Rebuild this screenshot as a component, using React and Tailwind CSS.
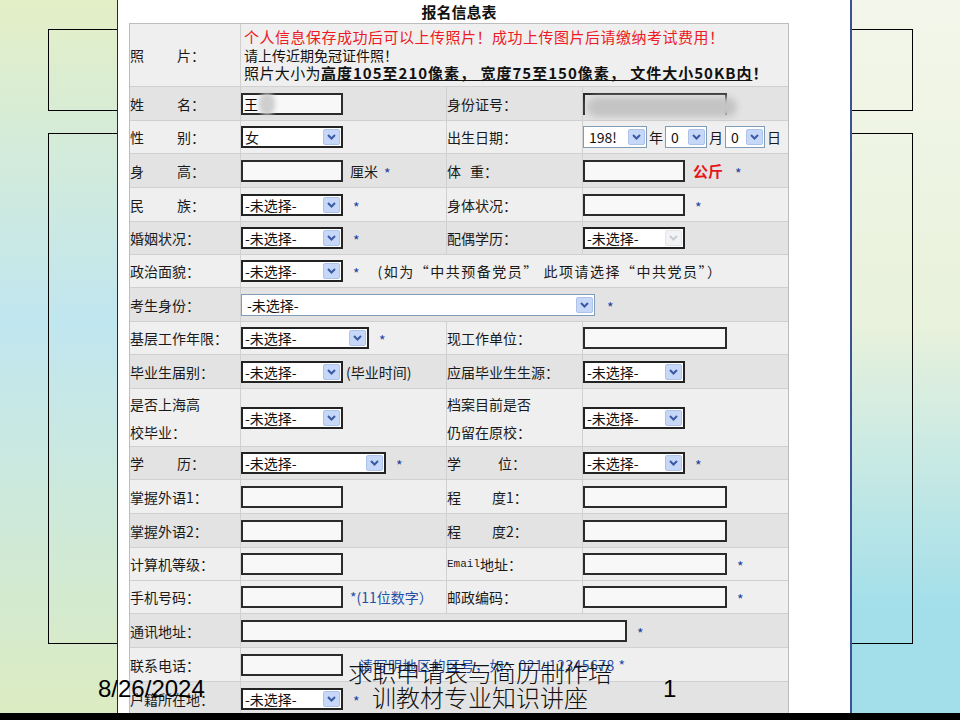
import React from 'react';

// column widths of the form table (inner, border-box)
const C1 = 'w-[111px]';
const C2 = 'w-[206px]';
const C3 = 'w-[136px]';
const C4 = 'w-[205px]';
const SPAN = 'w-[547px]';

const Arrow = ({ dim = false }) => (
  <span
    className={`flex h-[16px] w-[17px] shrink-0 items-center justify-center rounded-[2px] border ${
      dim ? 'border-[#e3e5e9] bg-[#f2f3f5]' : 'border-[#aec3ec] bg-[#c6d7f7]'
    }`}
  >
    <svg width="9" height="6" viewBox="0 0 9 6">
      <path d="M1 1l3.5 3.5L8 1" fill="none" stroke={dim ? '#c8cbd1' : '#3b5aa6'} strokeWidth="2" />
    </svg>
  </span>
);

const Select = ({ w = 'w-[102px]', value = '-未选择-', xp = false, dim = false }) => (
  <div
    className={`${w} flex h-[22px] shrink-0 items-center justify-between bg-white ${
      xp ? 'border border-[#7f9db9] pl-[5px] pr-[1px]' : 'border-2 border-[#232323] pl-[2px] pr-[1px]'
    }`}
  >
    <span className="text-[14px] leading-none text-[#111]">{value}</span>
    <Arrow dim={dim} />
  </div>
);

const Input = ({ w = 'w-[102px]' }) => (
  <input
    type="text"
    readOnly
    className={`${w} h-[22px] shrink-0 border-2 border-[#2b2b2b] bg-[#f8f8f8] outline-none`}
  />
);

const Star = ({ ml = 'ml-[10px]' }) => (
  <span className={`${ml} inline-block translate-y-[2px] text-[14px] leading-none text-[#1f3f9f]`}>*</span>
);

// label with a gap between two characters, e.g. 姓　名：
const Label = ({ a, b, gap = 'ml-[33px]' }) => (
  <span className="text-[14px] leading-none text-[#1a1a1a]">
    {a}
    <span className={`inline-block ${gap}`}>{b}</span>
  </span>
);

const Text = ({ children, className = '' }) => (
  <span className={`text-[14px] leading-none text-[#1a1a1a] ${className}`}>{children}</span>
);

const Row = ({ h = 'h-[33px]', bg = 'bg-[#efefef]', children }) => (
  <div className={`flex ${h} shrink-0 border-b border-[#d0d0d0] ${bg}`}>{children}</div>
);

const Cell = ({ w, last = false, stack = false, className = '', children }) => (
  <div
    className={`flex h-full ${stack ? 'flex-col items-start justify-center' : 'items-center'} ${w} ${
      last ? '' : 'border-r border-[#d0d0d0]'
    } ${className}`}
  >
    {children}
  </div>
);

const L = 'bg-[#efefef]';
const D = 'bg-[#e3e3e3]';

const FormTable = () => (
  <div className="ml-[11px] w-[660px] border border-b-0 border-[#bdbdbd]">
    <Row h="h-[63px]" bg={L}>
      <Cell w={C1}><Label a="照" b="片：" /></Cell>
      <Cell w={SPAN} last stack className="pl-[3px]">
        <p className="text-[15px] leading-[18px] tracking-[0.5px] text-[#ec1b24]">
          个人信息保存成功后可以上传照片！成功上传图片后请缴纳考试费用！
        </p>
        <p className="text-[14px] leading-[18px] text-[#111]">请上传近期免冠证件照！</p>
        <p className="text-[15px] leading-[18px] tracking-[0.4px] text-[#111]">
          照片大小为
          <b className="font-bold underline tracking-[1px]">高度105至210像素， 宽度75至150像素， 文件大小50KB内</b>
          <b className="font-bold">！</b>
        </p>
      </Cell>
    </Row>

    <Row h="h-[34px]" bg={D}>
      <Cell w={C1}><Label a="姓" b="名：" /></Cell>
      <Cell w={C2}>
        <div className="relative flex h-[22px] w-[102px] items-center border-2 border-[#2b2b2b] bg-[#f8f8f8] pl-[1px]">
          <span className="text-[14px] leading-none">王</span>
          <span className="absolute left-[16px] top-[-2px] h-[22px] w-[16px] rounded-full bg-[#cfcfcf] blur-[2px]" />
        </div>
      </Cell>
      <Cell w={C3}><Text>身份证号：</Text></Cell>
      <Cell w={C4} last>
        <div className="relative h-[22px] w-[144px] border-t-2 border-l-2 border-r-2 border-[#2b2b2b]">
          <span className="absolute left-[2px] top-[2px] h-[20px] w-[150px] rounded-full bg-[#c4c4c4] blur-[3px]" />
        </div>
      </Cell>
    </Row>

    <Row h="h-[33px]" bg={L}>
      <Cell w={C1}><Label a="性" b="别：" /></Cell>
      <Cell w={C2}><Select value="女" /></Cell>
      <Cell w={C3}><Text>出生日期：</Text></Cell>
      <Cell w={C4} last>
        <Select w="w-[64px]" value="198!" xp />
        <Text className="mx-[2px]">年</Text>
        <Select w="w-[42px]" value="0" xp />
        <Text className="mx-[2px]">月</Text>
        <Select w="w-[40px]" value="0" xp />
        <Text className="ml-[2px]">日</Text>
      </Cell>
    </Row>

    <Row h="h-[34px]" bg={D}>
      <Cell w={C1}><Label a="身" b="高：" /></Cell>
      <Cell w={C2}>
        <Input />
        <Text className="ml-[7px]">厘米</Text>
        <Star ml="ml-[6px]" />
      </Cell>
      <Cell w={C3}><Label a="体" b="重：" gap="ml-[9px]" /></Cell>
      <Cell w={C4} last>
        <Input />
        <span className="ml-[8px] text-[15px] font-bold leading-none text-[#e8151b]">公斤</span>
        <Star ml="ml-[12px]" />
      </Cell>
    </Row>

    <Row h="h-[34px]" bg={L}>
      <Cell w={C1}><Label a="民" b="族：" /></Cell>
      <Cell w={C2}><Select /><Star /></Cell>
      <Cell w={C3}><Text>身体状况：</Text></Cell>
      <Cell w={C4} last><Input /><Star /></Cell>
    </Row>

    <Row h="h-[33px]" bg={D}>
      <Cell w={C1}><Text>婚姻状况：</Text></Cell>
      <Cell w={C2}><Select /><Star /></Cell>
      <Cell w={C3}><Text>配偶学历：</Text></Cell>
      <Cell w={C4} last><Select dim /></Cell>
    </Row>

    <Row h="h-[33px]" bg={L}>
      <Cell w={C1}><Text>政治面貌：</Text></Cell>
      <Cell w={SPAN} last>
        <Select />
        <Star />
        <Text className="ml-[18px] tracking-[1.5px]">(如为“中共预备党员” 此项请选择“中共党员”）</Text>
      </Cell>
    </Row>

    <Row h="h-[34px]" bg={D}>
      <Cell w={C1}><Text>考生身份：</Text></Cell>
      <Cell w={SPAN} last>
        <Select w="w-[354px]" xp />
        <Star ml="ml-[12px]" />
      </Cell>
    </Row>

    <Row h="h-[33px]" bg={L}>
      <Cell w={C1}><Text>基层工作年限：</Text></Cell>
      <Cell w={C2}><Select w="w-[128px]" /><Star /></Cell>
      <Cell w={C3}><Text>现工作单位：</Text></Cell>
      <Cell w={C4} last><Input w="w-[144px]" /></Cell>
    </Row>

    <Row h="h-[34px]" bg={D}>
      <Cell w={C1}><Text>毕业生届别：</Text></Cell>
      <Cell w={C2}><Select /><Text className="ml-[3px]">(毕业时间)</Text></Cell>
      <Cell w={C3}><Text>应届毕业生生源：</Text></Cell>
      <Cell w={C4} last><Select /></Cell>
    </Row>

    <Row h="h-[58px]" bg={L}>
      <Cell w={C1} stack>
        <p className="text-[14px] leading-[28px] text-[#1a1a1a]">是否上海高</p>
        <p className="text-[14px] leading-[28px] text-[#1a1a1a]">校毕业：</p>
      </Cell>
      <Cell w={C2}><Select /></Cell>
      <Cell w={C3} stack>
        <p className="text-[14px] leading-[28px] text-[#1a1a1a]">档案目前是否</p>
        <p className="text-[14px] leading-[28px] text-[#1a1a1a]">仍留在原校：</p>
      </Cell>
      <Cell w={C4} last><Select /></Cell>
    </Row>

    <Row h="h-[33px]" bg={D}>
      <Cell w={C1}><Label a="学" b="历：" /></Cell>
      <Cell w={C2}><Select w="w-[145px]" /><Star /></Cell>
      <Cell w={C3}><Label a="学" b="位：" gap="ml-[37px]" /></Cell>
      <Cell w={C4} last><Select /><Star /></Cell>
    </Row>

    <Row h="h-[34px]" bg={L}>
      <Cell w={C1}><Text>掌握外语1：</Text></Cell>
      <Cell w={C2}><Input /></Cell>
      <Cell w={C3}><Label a="程" b="度1：" gap="ml-[31px]" /></Cell>
      <Cell w={C4} last><Input w="w-[144px]" /></Cell>
    </Row>

    <Row h="h-[34px]" bg={D}>
      <Cell w={C1}><Text>掌握外语2：</Text></Cell>
      <Cell w={C2}><Input /></Cell>
      <Cell w={C3}><Label a="程" b="度2：" gap="ml-[31px]" /></Cell>
      <Cell w={C4} last><Input w="w-[144px]" /></Cell>
    </Row>

    <Row h="h-[33px]" bg={L}>
      <Cell w={C1}><Text>计算机等级：</Text></Cell>
      <Cell w={C2}><Input /></Cell>
      <Cell w={C3}>
        <span className="font-['Liberation_Mono',monospace] text-[11px] leading-none text-[#1a1a1a]">Email</span>
        <Text>地址：</Text>
      </Cell>
      <Cell w={C4} last><Input w="w-[144px]" /><Star /></Cell>
    </Row>

    <Row h="h-[33px]" bg={L}>
      <Cell w={C1}><Text>手机号码：</Text></Cell>
      <Cell w={C2}>
        <Input />
        <span className="ml-[7px] text-[14px] leading-none text-[#2450a8]">*(11位数字）</span>
      </Cell>
      <Cell w={C3}><Text>邮政编码：</Text></Cell>
      <Cell w={C4} last><Input w="w-[144px]" /><Star /></Cell>
    </Row>

    <Row h="h-[34px]" bg={D}>
      <Cell w={C1}><Text>通讯地址：</Text></Cell>
      <Cell w={SPAN} last>
        <Input w="w-[386px]" />
        <Star />
      </Cell>
    </Row>

    <Row h="h-[34px]" bg={L}>
      <Cell w={C1}><Text>联系电话：</Text></Cell>
      <Cell w={SPAN} last>
        <Input />
        <span className="ml-[16px] text-[14px] leading-none tracking-[0.5px] text-[#2450a8]">请写明地区的区号，如：021-12345678 *</span>
      </Cell>
    </Row>

    <Row h="h-[34px]" bg={D}>
      <Cell w={C1}><Text>户籍所在地：</Text></Cell>
      <Cell w={SPAN} last><Select /><Star /></Cell>
    </Row>
  </div>
);

export default function App() {
  return (
    <div className="relative flex h-[720px] w-[960px] flex-col overflow-hidden bg-white font-['Noto_Sans_CJK_SC',sans-serif]">
      <div className="flex h-[713px] shrink-0">
        {/* left decoration */}
        <div className="flex w-[117px] shrink-0 flex-col items-end bg-linear-to-b from-[#e4efc6] via-[#c0e6ef] via-45% to-[#dcecc2] pt-[29px]">
          <div className="h-[82px] w-[69px] border-y border-l border-black" />
          <div className="mt-[22px] h-[511px] w-[69px] border-y border-l border-black" />
        </div>
        <div className="w-px shrink-0 bg-[#2b2b2b]" />

        {/* slide content */}
        <div className="flex w-[732px] shrink-0 flex-col overflow-hidden bg-white">
          <div className="flex h-[23px] w-[682px] shrink-0 items-center justify-center">
            <h1 className="text-[15px] font-bold leading-[21px] text-[#111]">报名信息表</h1>
          </div>
          <FormTable />
        </div>

        <div className="w-[2px] shrink-0 bg-[#3b5296]" />
        {/* right decoration */}
        <div className="flex w-[108px] shrink-0 flex-col items-start bg-linear-to-b from-[#f3f6ea] via-[#e9f2dc] via-45% to-[#a3dfea] to-85% pt-[29px]">
          <div className="h-[82px] w-[61px] border-y border-r border-black" />
          <div className="mt-[22px] h-[511px] w-[61px] border-y border-r border-black" />
        </div>
      </div>
      <div className="h-[7px] shrink-0 bg-black" />

      {/* slide footer */}
      <span className="absolute left-[98px] top-[677px] font-['Liberation_Sans',Arial,sans-serif] text-[24px] leading-[24px] text-black">
        8/26/2024
      </span>
      <div className="absolute left-[330px] top-[659px] w-[300px] text-center text-[24px] font-light leading-[25px] text-[#111]">
        <p>求职申请表与简历制作培</p>
        <p>训教材专业知识讲座</p>
      </div>
      <span className="absolute left-[663px] top-[677px] font-['Liberation_Sans',Arial,sans-serif] text-[24px] leading-[24px] text-black">
        1
      </span>
    </div>
  );
}
